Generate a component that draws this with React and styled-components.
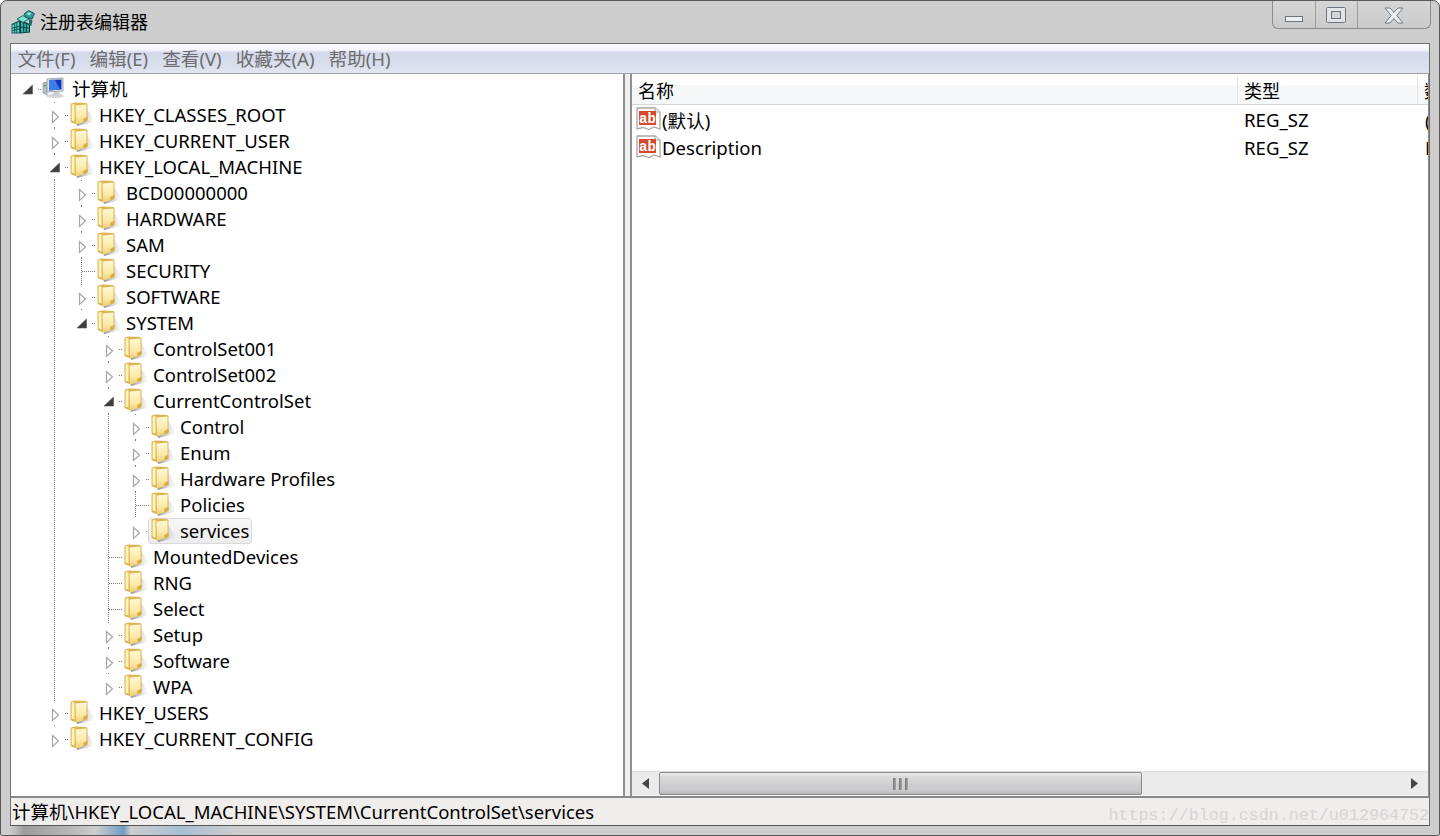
import React from 'react';
import styled, { createGlobalStyle } from 'styled-components';

const UI_FONT = '"Noto Sans", "Noto Sans CJK SC", sans-serif';

const GlobalStyle = createGlobalStyle`
  html, body { margin: 0; padding: 0; background: #fff; }
  * { box-sizing: border-box; }
`;

const TREE = {
  name: '计算机', kind: 'computer', open: true, children: [
    { name: 'HKEY_CLASSES_ROOT', more: true },
    { name: 'HKEY_CURRENT_USER', more: true },
    {
      name: 'HKEY_LOCAL_MACHINE', open: true, children: [
        { name: 'BCD00000000', more: true },
        { name: 'HARDWARE', more: true },
        { name: 'SAM', more: true },
        { name: 'SECURITY' },
        { name: 'SOFTWARE', more: true },
        {
          name: 'SYSTEM', open: true, children: [
            { name: 'ControlSet001', more: true },
            { name: 'ControlSet002', more: true },
            {
              name: 'CurrentControlSet', open: true, children: [
                { name: 'Control', more: true },
                { name: 'Enum', more: true },
                { name: 'Hardware Profiles', more: true },
                { name: 'Policies' },
                { name: 'services', more: true, selected: true },
              ],
            },
            { name: 'MountedDevices' },
            { name: 'RNG' },
            { name: 'Select' },
            { name: 'Setup', more: true },
            { name: 'Software', more: true },
            { name: 'WPA', more: true },
          ],
        },
      ],
    },
    { name: 'HKEY_USERS', more: true },
    { name: 'HKEY_CURRENT_CONFIG', more: true },
  ],
};

const VALUES = [
  { name: '(默认)', type: 'REG_SZ', data: '(数值未设置)' },
  { name: 'Description', type: 'REG_SZ', data: 'Description' },
];

const MENUS = ['文件(F)', '编辑(E)', '查看(V)', '收藏夹(A)', '帮助(H)'];

// flatten the tree so each row knows which ancestor lines still run past it
function flatten(node, depth, guides, hasNext, out) {
  out.push({ ...node, depth, guides, hasNext });
  (node.children || []).forEach((child, i, all) => {
    const next = i < all.length - 1;
    flatten(child, depth + 1, depth === 0 ? [false] : [...guides, hasNext], next, out);
  });
  return out;
}

const ROWS = flatten(TREE, 0, [], false, []);

function RegistryIcon() {
  return (
    <svg width="24" height="24" viewBox="0 0 24 24">
      <polygon points="0.500,14 9,10 9,23.500 0.500,23.500" fill="#0d5f5c" />
      <polygon points="9,10 19,14 19,22.500 9,23.500" fill="#083f3e" />
      <polygon points="1.500,15 8,12 8,22.500 1.500,22.500" fill="#63d8c8" />
      <path d="M3.700 14v9M5.900 13v10M1.500 18l6.500-1.500M1.500 20.500l6.500-1.500" stroke="#0c4f50" strokeWidth="1" />
      <polygon points="10,12 18,15 18,21.500 10,22.500" fill="#35b0a6" />
      <path d="M12.700 13v9M15.300 14v8M10 17l8 1.200" stroke="#0c4544" strokeWidth="1" />
      <polygon points="6,9 12,5.500 18,9 12,12.500" fill="#7fe2d6" stroke="#0c4f50" strokeWidth="0.8" />
      <polygon points="13,4 17.500,0.500 23.500,3.500 21,9 15,7.500" fill="#2e9c98" stroke="#0b4645" strokeWidth="0.8" />
      <polygon points="15.500,3.800 17.800,2.300 20.500,3.800 18,5.500" fill="#9fece2" />
      <polygon points="18,9 21.500,10 20.500,16 18,14.500" fill="#1d6f6d" />
    </svg>
  );
}

function ComputerIcon() {
  return (
    <svg width="24" height="22" viewBox="0 0 24 22">
      <ellipse cx="13" cy="19" rx="9" ry="2" fill="#d5d8da" />
      <polygon points="1,6 5,5 5,18 1,16" fill="#bcc3c6" stroke="#7d8588" strokeWidth="0.6" />
      <rect x="2" y="8" width="2" height="1.500" fill="#57a84b" />
      <polygon points="5,2 21,1 21,14 5,15" fill="#e2e6e9" stroke="#8a9296" strokeWidth="0.8" />
      <polygon points="7,3 19.500,2.500 19.500,12.500 7,13.500" fill="#1437b8" />
      <polygon points="7,3 13,2.800 18,12.600 7,13.500" fill="#3e7de8" />
      <polygon points="12,15 17,14.500 18,18 10,18.500" fill="#c5cbce" />
    </svg>
  );
}

function FolderIcon() {
  return (
    <svg width="25" height="26" viewBox="0 0 25 26">
      <defs>
        <linearGradient id="folderFront" x1="0" y1="0" x2="0" y2="1">
          <stop offset="0" stopColor="#fff8d6" />
          <stop offset="0.6" stopColor="#fbe9a6" />
          <stop offset="1" stopColor="#eccd72" />
        </linearGradient>
        <linearGradient id="folderShade" x1="0" y1="0" x2="1" y2="0">
          <stop offset="0" stopColor="#666" stopOpacity="0.8" />
          <stop offset="1" stopColor="#c4c4c4" stopOpacity="0.1" />
        </linearGradient>
      </defs>
      <polygon points="18,8 24.500,17 24.500,21 8,25 7,21" fill="url(#folderShade)" />
      <path d="M2 2.500 L6 1.500 L17 2 L18.500 3 L18.500 19 L8 23.500 L2.500 21.500 Q1.500 21 1.500 20 L1.500 3.500 Q1.500 2.500 2 2.500 Z" fill="#dcb552" />
      <path d="M2.600 3.500 L5.500 3 L5.500 20.500 L2.600 19.500 Z" fill="#fff3bf" />
      <path d="M6.500 4.500 L17.500 3.500 L17.500 16 L14.500 18 L14.500 21 L7 23.800 Z" fill="url(#folderFront)" />
      <path d="M14.500 18 L18.500 16 L18.500 20 L14.500 21.500 Z" fill="#d8ae40" />
    </svg>
  );
}

function ValueIcon() {
  return (
    <svg width="25" height="24" viewBox="0 0 25 24">
      <path d="M1 1 H19 L24 5 V22 L18 20 L13 22.500 L7 20.500 L1 22 Z" fill="#fff" stroke="#a8a8a8" strokeWidth="1.300" />
      <path d="M19 1 V5 H24" fill="#eee" stroke="#a8a8a8" />
      <rect x="3" y="4" width="17" height="14" fill="#d9482a" />
      <text x="11.500" y="15.500" textAnchor="middle" fontFamily="'Liberation Mono', monospace" fontWeight="700" fontSize="14" fill="#fff">ab</text>
    </svg>
  );
}

function Connector({ more, open, hasNext }) {
  const dots = { stroke: '#7a7a7a', strokeWidth: 1, strokeDasharray: '1 1' };
  if (!more && !open) {
    return (
      <ConnectorBox width="27" height="26">
        <line x1="12.500" y1="0" x2="12.500" y2={hasNext ? 26 : 14} {...dots} />
        <line x1="13" y1="13.500" x2="27" y2="13.500" {...dots} />
      </ConnectorBox>
    );
  }
  return (
    <ConnectorBox width="27" height="26">
      {hasNext && <rect x="12" y="0" width="1" height="1" fill="#7a7a7a" />}
      {hasNext && <rect x="12" y="25" width="1" height="1" fill="#7a7a7a" />}
      <rect x="23" y="13" width="1" height="1" fill="#7a7a7a" />
      <rect x="25" y="13" width="1" height="1" fill="#7a7a7a" />
      {open
        ? <polygon points="17.500,9 17.500,18 8,18" fill="#3e3e3e" stroke="#555" strokeWidth="0.6" />
        : <polygon points="10.500,9.500 16.500,15 10.500,20.500" fill="#fff" stroke="#a6a6a6" strokeWidth="1.200" />}
    </ConnectorBox>
  );
}

export default function App() {
  return (
    <>
      <GlobalStyle />
      <Window>
        <TitleBar>
          <TitleIcon><RegistryIcon /></TitleIcon>
          <TitleText>注册表编辑器</TitleText>
          <Caption>
            <CaptionButton $width={43}>
              <svg width="19" height="7" viewBox="0 0 19 7"><rect x="0.500" y="0.500" width="17" height="5" fill="#eef0f1" stroke="#6b747d" /></svg>
            </CaptionButton>
            <CaptionButton $width={42} $top>
              <svg width="21" height="17" viewBox="0 0 21 17">
                <rect x="0.500" y="0.500" width="19" height="15" rx="1" fill="#e2e4e5" stroke="#6b747d" />
                <rect x="5.500" y="4.500" width="9" height="7" fill="#d2d4d6" stroke="#6b747d" />
              </svg>
            </CaptionButton>
            <CaptionButton $width={72} $top>
              <svg width="20" height="17" viewBox="0 0 20 17">
                <path d="M1 1 H6 L10 5.500 L14 1 H19 L12.800 8.500 L19 16 H14 L10 11.500 L6 16 H1 L7.200 8.500 Z" fill="#eceeef" stroke="#6f787f" strokeWidth="1" />
              </svg>
            </CaptionButton>
          </Caption>
        </TitleBar>

        <Client>
          <MenuBar>
            {MENUS.map(menu => <MenuItem key={menu}>{menu}</MenuItem>)}
          </MenuBar>

          <Panes>
            <TreePane>
              {ROWS.map(row => (
                <TreeRow key={row.name}>
                  {row.guides.map((on, i) => <Guide key={i} $on={on} />)}
                  <Connector more={row.more} open={row.open} hasNext={row.hasNext} />
                  <NodeLabel $selected={row.selected}>
                    <NodeIcon>{row.kind === 'computer' ? <ComputerIcon /> : <FolderIcon />}</NodeIcon>
                    {row.name}
                  </NodeLabel>
                </TreeRow>
              ))}
            </TreePane>

            <Splitter />

            <ListPane>
              <ListHeader>
                <HeaderCell $width={606}>名称</HeaderCell>
                <HeaderCell $width={180}>类型</HeaderCell>
                <HeaderCell $width={60}>数据</HeaderCell>
              </ListHeader>
              <ListBody>
                {VALUES.map(value => (
                  <ValueRow key={value.name}>
                    <NameCell><ValueIcon /><ValueName>{value.name}</ValueName></NameCell>
                    <TypeCell>{value.type}</TypeCell>
                    <DataCell>{value.data}</DataCell>
                  </ValueRow>
                ))}
              </ListBody>
              <ScrollBar>
                <ScrollArrow>
                  <svg width="7" height="11" viewBox="0 0 7 11"><polygon points="7,0 7,11 0,5.500" fill="#454545" /></svg>
                </ScrollArrow>
                <ScrollThumb>
                  <Grip /><Grip /><Grip />
                </ScrollThumb>
                <ScrollTrack />
                <ScrollArrow>
                  <svg width="7" height="11" viewBox="0 0 7 11"><polygon points="0,0 0,11 7,5.500" fill="#454545" /></svg>
                </ScrollArrow>
              </ScrollBar>
            </ListPane>
          </Panes>

          <StatusBar>
            <StatusText>计算机\HKEY_LOCAL_MACHINE\SYSTEM\CurrentControlSet\services</StatusText>
            <Watermark>https://blog.csdn.net/u012964752</Watermark>
          </StatusBar>
        </Client>
        <BlurStrip />
      </Window>
    </>
  );
}

const Window = styled.div`
  width: 1440px;
  height: 836px;
  display: flex;
  flex-direction: column;
  padding: 0 8px 0 9px;
  overflow: hidden;
  background: #cdcdcd;
  border: 1px solid #5a5a5a;
  border-radius: 7px 7px 2px 2px;
  font-family: ${UI_FONT};
  color: #000;
`;

const TitleBar = styled.div`
  height: 42px;
  flex: none;
  display: flex;
  align-items: flex-start;
`;

const TitleIcon = styled.div`
  width: 29px;
  height: 24px;
  margin-top: 9px;
  margin-left: 1px;
`;

const TitleText = styled.div`
  font-size: 18px;
  line-height: 24px;
  margin-top: 9px;
  flex: 1;
`;

const Caption = styled.div`
  display: flex;
  height: 29px;
  margin-top: -1px;
  border: 1px solid #8c8c8c;
  border-top: none;
  border-radius: 0 0 6px 6px;
  background: linear-gradient(#d6d6d6, #cbcbcb);
`;

const CaptionButton = styled.div`
  width: ${p => p.$width}px;
  display: flex;
  justify-content: center;
  align-items: ${p => (p.$top ? 'flex-start' : 'flex-end')};
  padding-top: ${p => (p.$top ? 7 : 0)}px;
  padding-bottom: ${p => (p.$top ? 0 : 5)}px;
  border-right: 1px solid #9d9d9d;

  &:last-child {
    border-right: none;
  }
`;

const Client = styled.div`
  width: 1420px;
  height: 783px;
  flex: none;
  display: flex;
  flex-direction: column;
  border: 1px solid #707070;
  border-bottom-color: #555;
  background: #f0eded;
`;

const MenuBar = styled.div`
  height: 30px;
  flex: none;
  display: flex;
  align-items: center;
  background: linear-gradient(#fbfcfe 0%, #f3f5fa 20%, #d3d9eb 30%, #d9deed 70%, #e2e6f1 100%);
  border-bottom: 1px solid #9d9fa5;
`;

const MenuItem = styled.div`
  padding: 0 7.500px 0 6.500px;
  font-size: 18.600px;
  line-height: 26px;
  color: #6d6d6d;
`;

const Panes = styled.div`
  flex: 1;
  min-height: 0;
  display: flex;
  border-bottom: 2px solid #8a8a8a;
`;

const TreePane = styled.div`
  width: 614px;
  flex: none;
  padding-top: 2px;
  background: #fff;
  border-right: 2px solid #8f8f8f;
  overflow: hidden;
`;

const TreeRow = styled.div`
  height: 26px;
  display: flex;
  align-items: center;
  padding-left: 4px;
  font-size: 18.500px;
  white-space: nowrap;
`;

const Guide = styled.div`
  width: 27px;
  height: 26px;
  flex: none;
  background-image: ${p => (p.$on ? 'repeating-linear-gradient(to bottom, #7a7a7a 0 1px, transparent 1px 2px)' : 'none')};
  background-size: 1px 100%;
  background-position: 12px 0;
  background-repeat: no-repeat;
`;

const ConnectorBox = styled.svg`
  width: 27px;
  height: 26px;
  flex: none;
  display: block;
`;

const NodeLabel = styled.div`
  height: 26px;
  display: flex;
  align-items: center;
  margin-left: -2px;
  padding: 0 2px 2px 1px;
  border: 1px solid ${p => (p.$selected ? '#d9d9d9' : 'transparent')};
  border-radius: 3px;
  background: ${p => (p.$selected ? 'linear-gradient(#f8f8f8, #ececec)' : 'transparent')};
`;

const NodeIcon = styled.div`
  width: 30px;
  height: 24px;
  flex: none;
  display: flex;
  align-items: center;
`;

const Splitter = styled.div`
  width: 5px;
  flex: none;
  background: #f0f0f0;
`;

const ListPane = styled.div`
  flex: 1;
  min-width: 0;
  display: flex;
  flex-direction: column;
  background: #fff;
  border-left: 2px solid #8f8f8f;
  border-right: 1px solid #8f8f8f;
`;

const ListHeader = styled.div`
  height: 31px;
  flex: none;
  display: flex;
  padding-top: 2px;
  overflow: hidden;
  border-bottom: 1px solid #d5d5d5;
  background: linear-gradient(#fff 0%, #fff 35%, #f6f7f8 36%, #f6f7f8 100%);
`;

const HeaderCell = styled.div`
  width: ${p => p.$width}px;
  flex: none;
  padding: 3px 0 0 6px;
  font-size: 18px;
  line-height: 24px;
  white-space: nowrap;
  border-right: 1px solid #e3e5e7;
`;

const ListBody = styled.div`
  flex: 1;
  min-height: 0;
`;

const ValueRow = styled.div`
  height: 28px;
  display: flex;
  align-items: center;
  font-size: 18.600px;
  white-space: nowrap;
  overflow: hidden;
`;

const NameCell = styled.div`
  width: 607px;
  flex: none;
  display: flex;
  align-items: center;
  padding-left: 4px;
`;

const ValueName = styled.span`
  margin-left: 1px;
`;

const TypeCell = styled.div`
  width: 180px;
  flex: none;
  padding-left: 5px;
`;

const DataCell = styled.div`
  flex: 1;
  min-width: 0;
  overflow: hidden;
  padding-left: 6px;
`;

const ScrollBar = styled.div`
  height: 25px;
  flex: none;
  display: flex;
  align-items: stretch;
  background: #ebebeb;
  border-top: 1px solid #dcdcdc;
  border-bottom: 1px solid #f6f6f6;
`;

const ScrollArrow = styled.div`
  width: 27px;
  flex: none;
  display: flex;
  align-items: center;
  justify-content: center;
`;

const ScrollThumb = styled.div`
  width: 483px;
  flex: none;
  display: flex;
  align-items: center;
  justify-content: center;
  gap: 2px;
  border: 1px solid #8b8b8b;
  border-radius: 2px;
  background: linear-gradient(#ededed 0%, #dcdcdc 15%, #d0d0d3 50%, #c9c9cc 85%, #b5b5b5 100%);
`;

const Grip = styled.div`
  width: 4px;
  height: 12px;
  background: linear-gradient(to right, #777, #9a9a9a 60%, #eee);
`;

const ScrollTrack = styled.div`
  flex: 1;
`;

const StatusBar = styled.div`
  height: 27px;
  flex: none;
  display: flex;
  justify-content: space-between;
  align-items: flex-start;
  padding-left: 1px;
  overflow: hidden;
  background: #f0eded;
`;

const StatusText = styled.div`
  font-size: 18.500px;
  line-height: 28px;
  white-space: nowrap;
`;

const Watermark = styled.div`
  font-family: "Liberation Mono", monospace;
  font-size: 16.700px;
  line-height: 20px;
  margin-top: 8px;
  color: #d8d4d4;
  white-space: nowrap;
`;

const BlurStrip = styled.div`
  height: 9px;
  flex: none;
  background: linear-gradient(to right, #cdcdcd 0, #9c9c9c 1%, #b5b5b5 4%, #cdcdcd 6%, #6f9dc4 8%, #cdcdcd 8.500%, #a8bfd4 12%, #cdcdcd 16%);
`;
